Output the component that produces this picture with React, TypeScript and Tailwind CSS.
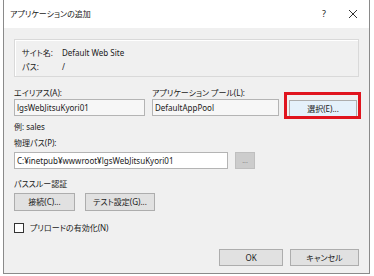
import React from 'react'

const font = "font-['Noto_Sans','Noto_Sans_CJK_JP',sans-serif] [font-feature-settings:'palt']"

function Btn({ w, children, className = '' }: { w: string; children: React.ReactNode; className?: string }) {
  return (
    <div className={`${w} h-[17px] flex items-center justify-center border border-[#adadad] bg-[#e1e1e1] text-[8px] leading-none ${className}`}>
      {children}
    </div>
  )
}

export default function App() {
  return (
    <div className={`w-[374px] h-[276px] bg-white overflow-hidden text-[#1a1a1a] ${font}`}>
      <div className="ml-[3px] w-[367px] h-[274px] border-x border-b border-[#8a8a8a] flex flex-col">
        {/* title bar */}
        <div className="h-[28px] bg-white flex items-center pl-[6px] pr-[11px] text-[8px]">
          <span className="flex-1">アプリケーションの追加</span>
          <span className="w-[10px] text-center mr-[19px] text-[9px]">?</span>
          <svg width="10" height="10" viewBox="0 0 10 10" className="stroke-[#333]">
            <path d="M1 1L9 9M9 1L1 9" strokeWidth="1" />
          </svg>
        </div>

        <div className="relative flex-1 bg-[#f0f0f0] px-[10px] text-[8px] leading-[12px]">
          {/* site group */}
          <div className="mt-[11px] h-[38px] border border-[#d9d9d9] shadow-[inset_1px_1px_0_#fff] pl-[7px] pt-[6px]">
            <div className="flex h-[14px] items-center">
              <span className="w-[40px]">サイト名:</span>
              <span>Default Web Site</span>
            </div>
            <div className="flex h-[14px] items-center">
              <span className="w-[40px]">パス:</span>
              <span>/</span>
            </div>
          </div>

          {/* alias / pool */}
          <div className="mt-[10px] flex">
            <div className="w-[131px]">
              <div>エイリアス(A):</div>
              <div className="h-[17px] border border-[#b4b4b4] bg-[#f7f7f7] flex items-center pl-[2px]">lgsWebJitsuKyori01</div>
            </div>
            <div className="ml-[7px] w-[127px]">
              <div>アプリケーション プール(L):</div>
              <div className="h-[17px] border border-[#b4b4b4] bg-[#f7f7f7] flex items-center pl-[2px]">DefaultAppPool</div>
            </div>
            <div className="ml-[10px] pt-[13px]">
              <Btn w="w-[68px]" className="bg-[#e5f1fb] border-[#0078d7]">選択(E)...</Btn>
            </div>
          </div>

          <div className="mt-[4px]">例: sales</div>

          <div className="mt-[4px]">物理パス(P):</div>
          <div className="mt-[3px] flex">
            <div className="w-[214px] h-[17px] border border-[#b4b4b4] bg-white flex items-center pl-[2px]">C:¥inetpub¥wwwroot¥lgsWebJitsuKyori01</div>
            <div className="ml-[7px] w-[20px] h-[17px] border border-[#bfbfbf] bg-[#cccccc] flex items-center justify-center text-[#8a8a8a] text-[7px]">...</div>
          </div>

          <div className="mt-[9px]">パススルー認証</div>
          <div className="mt-[3px] flex gap-[10px]">
            <Btn w="w-[61px]" className="h-[18px]">接続(C)...</Btn>
            <Btn w="w-[70px]" className="h-[18px]">テスト設定(G)...</Btn>
          </div>

          <div className="mt-[11px] flex items-center">
            <div className="w-[10px] h-[10px] border border-[#333] bg-white" />
            <span className="ml-[6px]">プリロードの有効化(N)</span>
          </div>

          <div className="mt-[15px] flex justify-end gap-[7px]">
            <Btn w="w-[64px]">OK</Btn>
            <Btn w="w-[69px]">キャンセル</Btn>
          </div>

          {/* red highlight annotation */}
          <div className="absolute left-[280px] top-[64px] w-[77px] h-[27px] border-[3px] border-[#e0141e]" />
        </div>
      </div>
    </div>
  )
}
